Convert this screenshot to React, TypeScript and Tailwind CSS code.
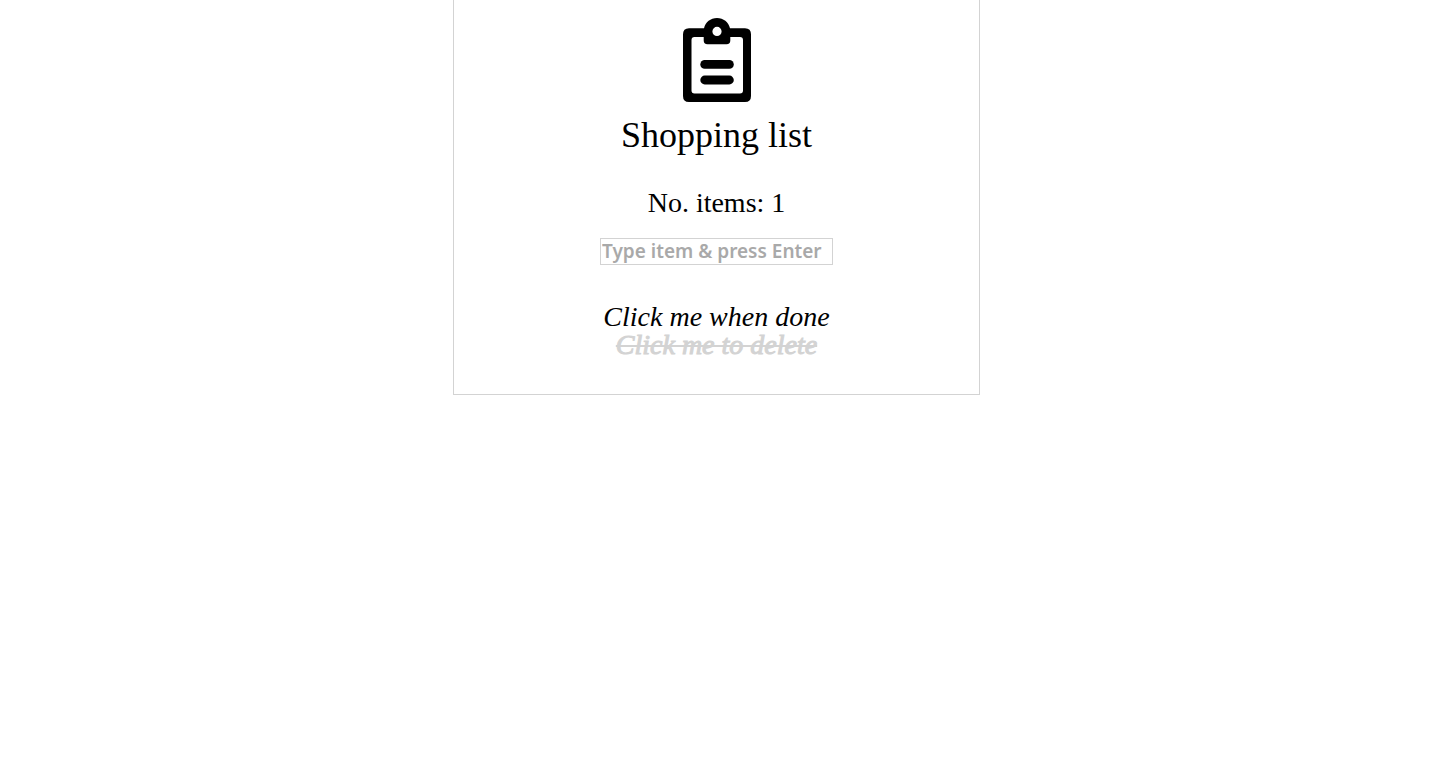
import { useState } from "react";
import type { KeyboardEvent } from "react";

type Item = { id: number; label: string; done: boolean };

const initialItems: Item[] = [
  { id: 1, label: "Click me when done", done: false },
  { id: 2, label: "Click me to delete", done: true },
];

function ClipboardIcon() {
  return (
    <svg className="h-[84px] w-[68px]" viewBox="0 0 68 84" aria-hidden="true">
      <path
        fillRule="evenodd"
        d="M6 10.2H21C22.5 4.200 27.500 0 34 0S45.500 4.200 47 10.200H62Q68 10.200 68 16.200V78Q68 84 62 84H6Q0 84 0 78V16.200Q0 10.200 6 10.200ZM11.500 19Q8.500 19 8.500 22V72.500Q8.500 75.500 11.500 75.500H57Q60 75.500 60 72.500V22Q60 19 57 19H47.300V22.500Q47.300 26.300 43.500 26.300H24.500Q20.700 26.300 20.700 22.500V19ZM34 8.800A4.600 4.600 0 1 0 34 18A4.600 4.600 0 1 0 34 8.800Z"
      />
      <rect x="17.300" y="42" width="33.500" height="8.800" rx="4.400" />
      <rect x="17.300" y="57.600" width="33.500" height="8.800" rx="4.400" />
    </svg>
  );
}

export default function App() {
  const [items, setItems] = useState<Item[]>(initialItems);
  const [draft, setDraft] = useState("");

  const addItem = (event: KeyboardEvent<HTMLInputElement>) => {
    const label = draft.trim();
    if (event.key !== "Enter" || !label) return;
    setItems([...items, { id: Date.now(), label, done: false }]);
    setDraft("");
  };

  const clickItem = (item: Item) => {
    setItems(
      item.done
        ? items.filter(({ id }) => id !== item.id)
        : items.map((other) => (other.id === item.id ? { ...other, done: true } : other)),
    );
  };

  return (
    <div className="flex justify-center bg-white pr-[18px] pl-4 font-['Liberation_Serif',serif] text-black">
      <main className="flex w-full max-w-[527px] flex-col items-center border border-t-0 border-[#d3d3d3] px-4 pt-[18px] pb-[35px]">
        <ClipboardIcon />
        <h1 className="mt-[11px] text-[36px] leading-[44px]">Shopping list</h1>
        <p className="mt-[30px] text-[28px] leading-8">
          No. items: {items.filter((item) => !item.done).length}
        </p>
        <input
          type="text"
          aria-label="New item"
          placeholder="Type item &amp; press Enter"
          value={draft}
          onChange={(event) => setDraft(event.target.value)}
          onKeyDown={addItem}
          className="mt-[19px] h-[27px] w-[233px] border border-[#d3d3d3] bg-white px-px font-['Noto_Sans',sans-serif] text-[19px] font-semibold placeholder:text-[#a9a9a9]"
        />
        <ul className="mt-[38px] flex flex-col items-center text-[28px] leading-7 italic">
          {items.map((item) => (
            <li key={item.id} className="flex">
              <button
                type="button"
                onClick={() => clickItem(item)}
                className={
                  item.done
                    ? "cursor-pointer text-[#d3d3d3] line-through decoration-2 [-webkit-text-stroke:1px_#d3d3d3]"
                    : "cursor-pointer"
                }
              >
                {item.label}
              </button>
            </li>
          ))}
        </ul>
      </main>
    </div>
  );
}
